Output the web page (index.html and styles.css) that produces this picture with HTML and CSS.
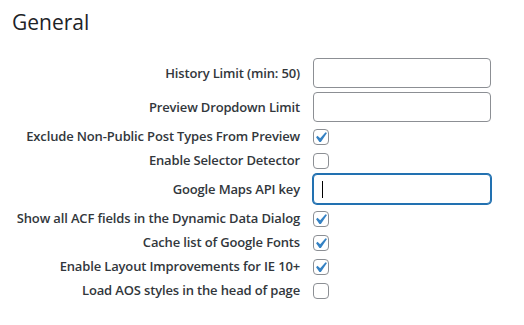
FILE: index.html
```html
<!DOCTYPE html>
<html lang="en">
<head>
    <meta charset="UTF-8">
    <meta name="viewport" content="width=device-width, initial-scale=1.0">
    <title>General Settings</title>
    <link rel="stylesheet" href="styles.css">
</head>
<body>
    <div class="settings">
        <h2 class="title">General</h2>
        <div class="form-table">
            <label class="row-label" for="history-limit">History Limit (min: 50)</label>
            <div class="field field-input"><input type="text" id="history-limit" class="text-input"></div>

            <label class="row-label" for="preview-limit">Preview Dropdown Limit</label>
            <div class="field field-input"><input type="text" id="preview-limit" class="text-input"></div>

            <label class="row-label">Exclude Non-Public Post Types From Preview</label>
            <div class="field field-check">
                <span class="checkbox"><svg class="check" viewBox="0 0 20 20"><path d="M14.83 4.89l1.34.94-5.81 8.38H9.02L5.78 9.67l1.34-1.25 2.57 2.4z"/></svg></span>
            </div>

            <label class="row-label">Enable Selector Detector</label>
            <div class="field field-check"><span class="checkbox"></span></div>

            <label class="row-label">Google Maps API key</label>
            <div class="field field-input"><div class="text-input focused"><span class="caret"></span></div></div>

            <label class="row-label">Show all ACF fields in the Dynamic Data Dialog</label>
            <div class="field field-check">
                <span class="checkbox"><svg class="check" viewBox="0 0 20 20"><path d="M14.83 4.89l1.34.94-5.81 8.38H9.02L5.78 9.67l1.34-1.25 2.57 2.4z"/></svg></span>
            </div>

            <label class="row-label">Cache list of Google Fonts</label>
            <div class="field field-check">
                <span class="checkbox"><svg class="check" viewBox="0 0 20 20"><path d="M14.83 4.89l1.34.94-5.81 8.38H9.02L5.78 9.67l1.34-1.25 2.57 2.4z"/></svg></span>
            </div>

            <label class="row-label">Enable Layout Improvements for IE 10+</label>
            <div class="field field-check">
                <span class="checkbox"><svg class="check" viewBox="0 0 20 20"><path d="M14.83 4.89l1.34.94-5.81 8.38H9.02L5.78 9.67l1.34-1.25 2.57 2.4z"/></svg></span>
            </div>

            <label class="row-label">Load AOS styles in the head of page</label>
            <div class="field field-check"><span class="checkbox"></span></div>
        </div>
    </div>
</body>
</html>
```

FILE: styles.css
```css
* {
    box-sizing: border-box;
}

body {
    margin: 0;
    background: #ffffff;
    color: #32373c;
    font-family: "Open Sans", "Noto Sans", sans-serif;
}

.settings {
    padding: 7px 0 0 12px;
}

.title {
    margin: 0;
    height: 49px;
    font-size: 21px;
    font-weight: 400;
    line-height: 30px;
    color: #1d2327;
}

.form-table {
    display: grid;
    grid-template-columns: 288px 178px;
    column-gap: 13px;
}

.row-label {
    display: flex;
    align-items: center;
    justify-content: flex-end;
    font-size: 13px;
    font-weight: 600;
    letter-spacing: -0.15px;
    white-space: nowrap;
}

.field {
    display: flex;
    align-items: center;
}

.field-input {
    height: 34px;
}

.field-check {
    height: 24px;
    padding-top: 1px;
}

.text-input {
    width: 178px;
    height: 30px;
    margin: 0;
    padding: 0 8px;
    border: 1px solid #8c8f94;
    border-radius: 4px;
    background: #ffffff;
    outline: none;
}

.text-input.focused {
    display: flex;
    align-items: center;
    border-color: #2271b1;
    box-shadow: 0 0 0 1px #2271b1;
}

.caret {
    width: 1px;
    height: 17px;
    background: #000000;
}

.checkbox {
    position: relative;
    width: 16px;
    height: 16px;
    border: 1px solid #8c8f94;
    border-radius: 4px;
    background: #ffffff;
}

.check {
    position: absolute;
    left: -4px;
    top: -3px;
    width: 21px;
    height: 21px;
    fill: #3582c4;
}
```
